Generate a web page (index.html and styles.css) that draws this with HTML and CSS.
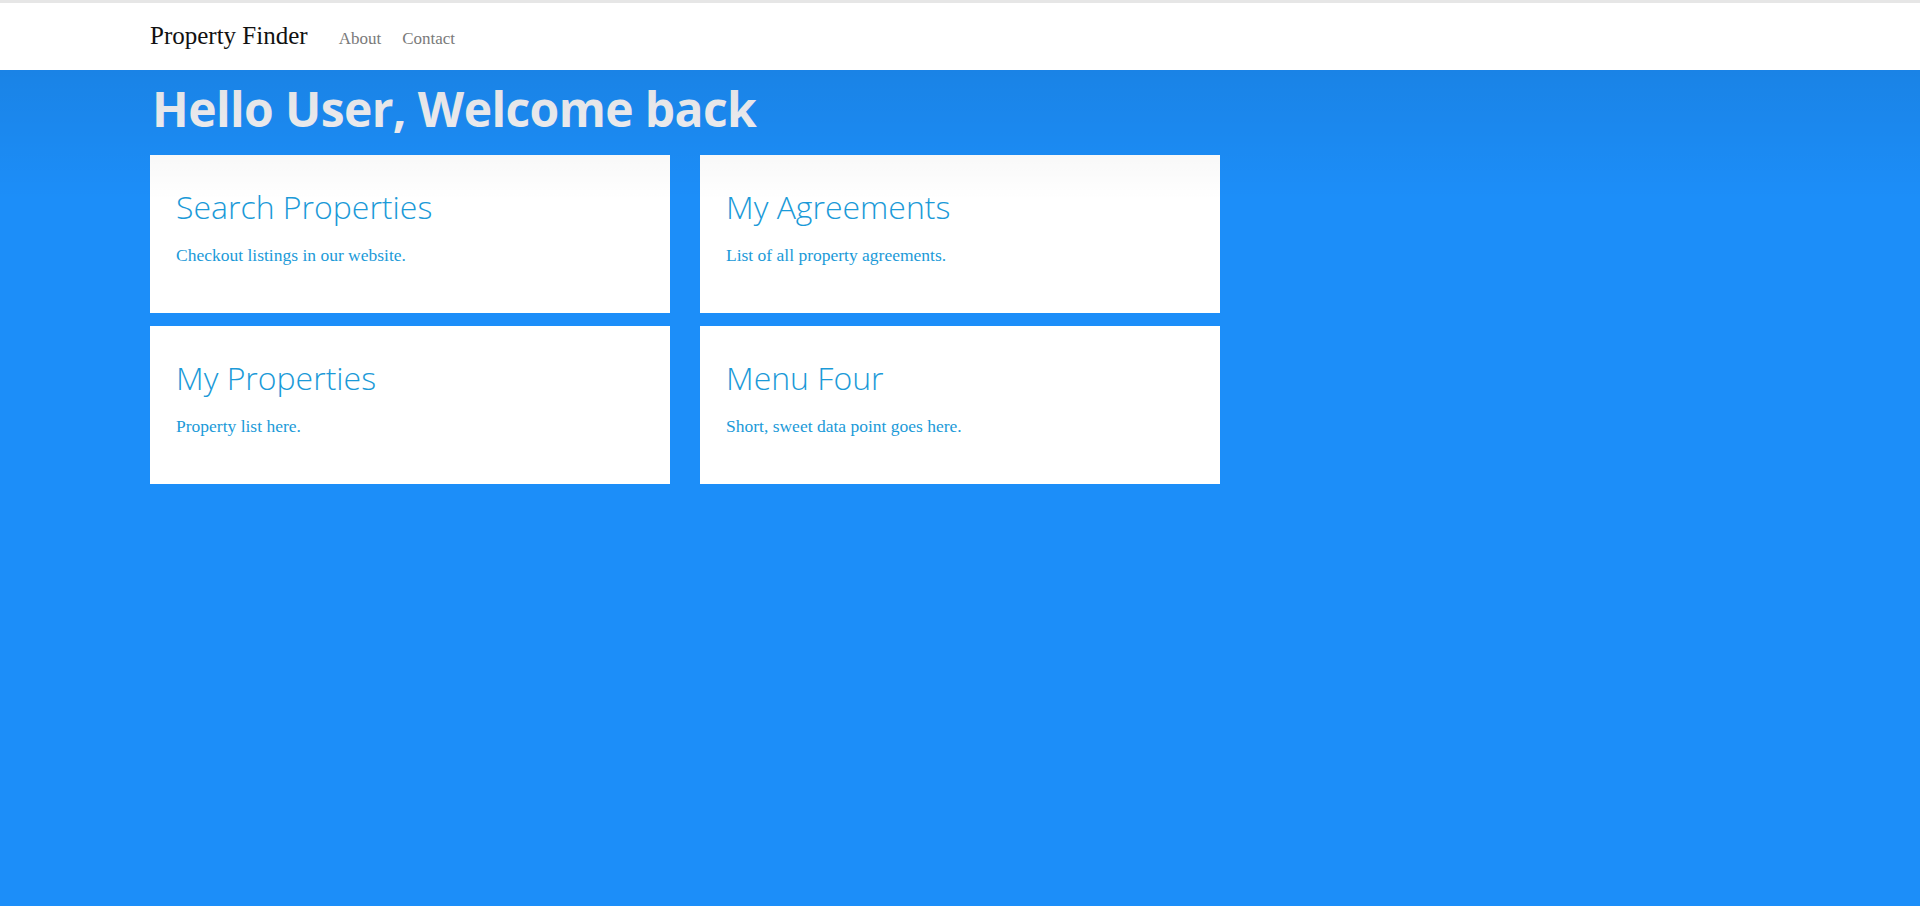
FILE: index.html
```html
<!DOCTYPE html>
<html lang="en">
<head>
<meta charset="utf-8">
<title>Property Finder</title>
<link rel="stylesheet" href="styles.css">
</head>
<body>
<nav class="navbar">
  <a class="brand" href="#">Property Finder</a>
  <a class="nav-link" href="#">About</a>
  <a class="nav-link" href="#">Contact</a>
</nav>
<main class="main">
  <div class="shade"></div>
  <h1 class="welcome">Hello User, Welcome back</h1>
  <div class="cards">
    <div class="card">
      <h2 class="card-title">Search Properties</h2>
      <p class="card-text">Checkout listings in our website.</p>
    </div>
    <div class="card">
      <h2 class="card-title">My Agreements</h2>
      <p class="card-text">List of all property agreements.</p>
    </div>
    <div class="card">
      <h2 class="card-title">My Properties</h2>
      <p class="card-text">Property list here.</p>
    </div>
    <div class="card">
      <h2 class="card-title">Menu Four</h2>
      <p class="card-text">Short, sweet data point goes here.</p>
    </div>
  </div>
</main>
</body>
</html>
```

FILE: styles.css
```css
html, body {
  margin: 0;
  padding: 0;
  height: 100%;
}
body {
  background: #1c8ef9;
  font-family: "Liberation Serif", "Times New Roman", serif;
  display: flex;
  flex-direction: column;
}
.navbar {
  border-top: 3px solid #e6e6e6;
  background: #ffffff;
  height: 70px;
  box-sizing: border-box;
  display: flex;
  align-items: baseline;
  padding: 19px 0 0 150px;
}
.brand {
  font-size: 25px;
  color: #111;
  text-decoration: none;
  margin-right: 31px;
}
.nav-link {
  font-size: 17px;
  color: #7a7a7a;
  text-decoration: none;
  margin-right: 21px;
}
.main {
  position: relative;
  flex: 1;
  padding: 0 0 0 150px;
}
.shade {
  position: absolute;
  left: 0;
  right: 0;
  top: 0;
  height: 130px;
  background: linear-gradient(to bottom, rgba(0,0,0,0.08), rgba(0,0,0,0));
  pointer-events: none;
  z-index: 2;
}
.welcome {
  margin: 0;
  padding: 5px 0 0 2px;
  height: 85px;
  box-sizing: border-box;
  font-family: "Open Sans", "Noto Sans", sans-serif;
  font-weight: 700;
  font-size: 48px;
  line-height: 68px;
  color: #f4f4f7;
  letter-spacing: -0.6px;
}
.cards {
  display: grid;
  grid-template-columns: 520px 520px;
  column-gap: 30px;
  row-gap: 13px;
}
.card {
  background: #ffffff;
  height: 158px;
  box-sizing: border-box;
  padding: 29px 27px 0 26px;
}
.card-title {
  margin: 0;
  font-family: "Open Sans", "Noto Sans", sans-serif;
  font-weight: 300;
  font-size: 32px;
  line-height: 46px;
  color: #1b9ad8;
}
.card-text {
  margin: 13px 0 0 0;
  font-size: 17.5px;
  line-height: 24px;
  color: #1b9ad8;
}
```
